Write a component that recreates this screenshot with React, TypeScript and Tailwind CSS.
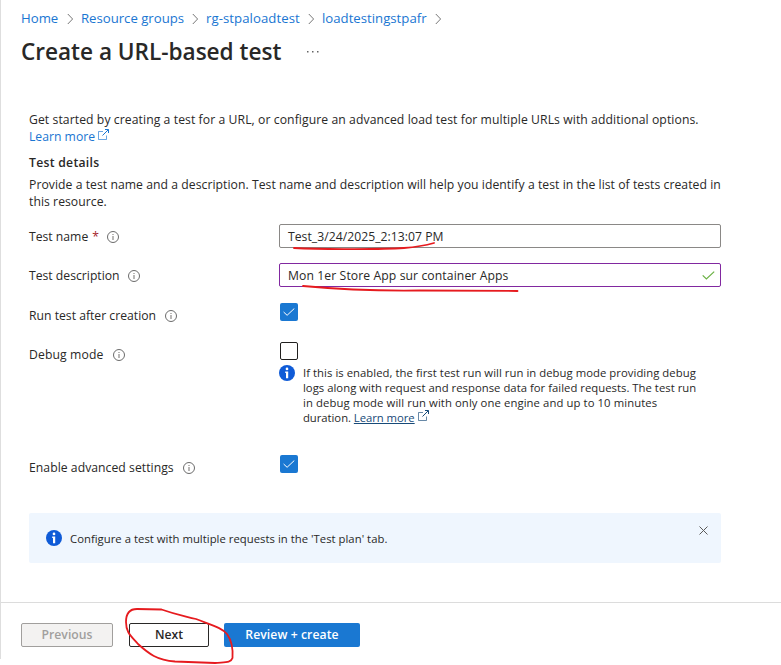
import React from "react";

function InfoOutline() {
  return (
    <svg width="12" height="12" viewBox="0 0 12 12" fill="none" className="shrink-0">
      <circle cx="6" cy="6" r="5.5" stroke="#6b6b6b" />
      <path d="M6 5v4" stroke="#8a8886" strokeWidth="1.2" />
      <path d="M6 2.9v1.2" stroke="#8a8886" strokeWidth="1.2" />
    </svg>
  );
}

function InfoSolid() {
  return (
    <svg width="16" height="16" viewBox="0 0 16 16" className="shrink-0">
      <circle cx="8" cy="8" r="8" fill="#0f5bd7" />
      <circle cx="8" cy="3.9" r="1.35" fill="#fff" />
      <path d="M6.2 6.4h3v6.8H7V8h-.8z" fill="#fff" />
    </svg>
  );
}

function External({ color }: { color: string }) {
  return (
    <svg width="11" height="11" viewBox="0 0 11 11" fill="none" stroke={color} className="shrink-0">
      <path d="M5 2.500H.5v8h8V6.500" opacity=".65" />
      <path d="M4.500 6.500 10.300.7M7 .5h3.500V4" />
    </svg>
  );
}

function Chevron() {
  return (
    <svg width="7" height="12" viewBox="0 0 7 12" fill="none" stroke="#767676" className="relative top-px shrink-0">
      <path d="M.8 1 5.600 6 .8 11" />
    </svg>
  );
}

function Checkbox({ checked = false }: { checked?: boolean }) {
  return checked ? (
    <span className="flex h-[18px] w-[18px] items-center justify-center rounded-[2px] bg-[#1a78d2]">
      <svg width="12" height="8" viewBox="0 0 12 8" fill="none" stroke="#fff">
        <path d="M.6 4 4.1 7.3 11.3.5" />
      </svg>
    </span>
  ) : (
    <span className="block h-[18px] w-[18px] rounded-[2px] border border-[#201f1e] bg-white" />
  );
}

function Label({ text, width, required }: { text: string; width: string; required?: boolean }) {
  return (
    <div className="flex h-[18px] w-[250px] items-center">
      <span className={`whitespace-nowrap ${width}`}>
        {text}
        {required && <span className="ml-1 text-[#a4262c]">*</span>}
      </span>
      <InfoOutline />
    </div>
  );
}

export default function App() {
  return (
    <div className="relative h-[665px] w-[781px] overflow-hidden bg-white font-['Open_Sans','Noto_Sans',sans-serif] text-[12.2px] text-[#292827]">
      <div className="h-[659px] border-l border-[#dedede]">
        <nav className="flex h-7 items-center pl-5 pt-2 text-[13.2px] whitespace-nowrap text-[#1a76d2]">
          <a className="w-[46px] pt-px">Home</a><Chevron />
          <a className="ml-[7px] w-[111px] pt-px tracking-[-0.02px]">Resource groups</a><Chevron />
          <a className="ml-[7px] w-[102px] pt-px tracking-[0.06px]">rg-stpaloadtest</a><Chevron />
          <a className="ml-[7px] w-[113px] pt-px">loadtestingstpafr</a><Chevron />
        </nav>
        <header className="mt-2 flex h-8 items-center pl-5">
          <h1 className="w-[286px] text-[22.6px] font-semibold tracking-[-0.02px] whitespace-nowrap">Create a URL-based test</h1>
          <svg width="12" height="2" viewBox="0 0 12 2" fill="#666"><path d="M0 0h1.5v1.5H0zM5 0h1.5v1.5H5zM10 0h1.5v1.5H10z" /></svg>
        </header>
        <main className="mt-[43px] pl-7">
          <div className="h-[34px] leading-[17px] whitespace-nowrap">
            <p className="tracking-[0.077px]">Get started by creating a test for a URL, or configure an advanced load test for multiple URLs with additional options.</p>
            <a className="flex text-[#1a76d2]"><span className="w-[69px]">Learn more</span><span className="pt-px"><External color="#1a76d2" /></span></a>
          </div>
          <h2 className="mt-[9px] h-[17px] leading-[18px] font-semibold tracking-[0.28px]">Test details</h2>
          <div className="mt-[5px] h-[34px] leading-[17px] tracking-[0.046px] whitespace-nowrap">
            <p>Provide a test name and a description. Test name and description will help you identify a test in the list of tests created in</p>
            <p>this resource.</p>
          </div>
          <div className="mt-[14px] flex h-6 items-center">
            <div className="pt-[2px]"><Label text="Test name" width="w-[78px]" required /></div>
            <div className="flex h-6 w-[442px] items-center rounded-[2px] border border-[#8a8886] pt-[2px] pl-2 tracking-[0.03px]">Test_3/24/2025_2:13:07 PM</div>
          </div>
          <div className="mt-[15px] flex h-6 items-center">
            <div className="pt-[2px]"><Label text="Test description" width="w-[99px]" /></div>
            <div className="flex h-6 w-[442px] items-center justify-between rounded-[2px] border border-[#8128a0] pr-[5px] pl-2">
              <span className="pt-[2px] tracking-[0.09px]">Mon 1er Store App sur container Apps</span>
              <svg width="13" height="9" viewBox="0 0 13 9" fill="none" stroke="#6bb144" strokeWidth="1.2"><path d="M.7 4.3 4.4 8 12.2.6" /></svg>
            </div>
          </div>
          <div className="mt-4 flex h-[18px]">
            <div className="pt-1"><Label text="Run test after creation" width="w-[136px]" /></div>
            <div className="pl-px"><Checkbox checked /></div>
          </div>
          <div className="mt-[21px] flex h-[95px]">
            <div className="pt-1"><Label text="Debug mode" width="w-[84px] tracking-[0.12px]" /></div>
            <div>
              <div className="pl-px"><Checkbox /></div>
              <div className="mt-[5px] flex">
                <InfoSolid />
                <div className="ml-2 text-[11.3px] leading-[15px] tracking-[0.045px] whitespace-nowrap">
                  <p>If this is enabled, the first test run will run in debug mode providing debug</p>
                  <p className="tracking-[0.02px]">logs along with request and response data for failed requests. The test run</p>
                  <p className="tracking-[0.09px]">in debug mode will run with only one engine and up to 10 minutes</p>
                  <p className="flex tracking-[-0.04px]">duration.&nbsp;<a className="mr-1 w-[60px] text-[#174a78] underline underline-offset-1">Learn more</a><External color="#174a78" /></p>
                </div>
              </div>
            </div>
          </div>
          <div className="mt-[18px] flex h-[18px]">
            <div className="pt-[4px]"><Label text="Enable advanced settings" width="w-[154px] tracking-[0.04px]" /></div>
            <div className="pl-px"><Checkbox checked /></div>
          </div>
          <div className="mt-[40px] flex h-[50px] w-[692px] items-center rounded-[2px] bg-[#eff6fe] pl-[17px]">
            <InfoSolid />
            <span className="ml-2 flex-1 pt-[2px] text-[11.3px] tracking-[0.025px]">Configure a test with multiple requests in the 'Test plan' tab.</span>
            <svg width="9" height="9" viewBox="0 0 9 9" stroke="#5b5a59" className="mr-[13px] mb-[15px]"><path d="m.5.5 8 8m0-8-8 8" /></svg>
          </div>
        </main>
        <footer className="mt-[39px] flex border-t border-[#dcdcdc] pt-5 pl-5 font-semibold">
          <button className="h-6 w-[92px] rounded-[2px] border border-[#a19f9d] bg-[#f3f2f1] text-[#a19f9d]">Previous</button>
          <button className="ml-4 h-6 w-20 rounded-[2px] border border-[#292827] bg-white">Next</button>
          <button className="ml-[15px] h-6 w-[136px] rounded-[2px] bg-[#1a78d2] tracking-[0.08px] text-white">Review + create</button>
        </footer>
      </div>
      <svg className="pointer-events-none absolute inset-0" width="781" height="665" viewBox="0 0 781 665" fill="none" stroke="#e61b1f" strokeWidth="1.8" strokeLinecap="round">
        <path d="M294 248C325 250 388 249 404 248C417 247 427 245 434 243" />
        <path d="M303 286C346 290 384 291 420 290.5L517.500 291" />
        <path d="M161.500 609.500C177 615 185 616 196 619C214 626 222 628 227 634C232 641 233 651 232.500 658C231 663 225 662 215 663L175 661.500C157 660 149 654 138 644C130 635 126 632 126 622C126 613 130 609 137 609Z" />
      </svg>
    </div>
  );
}
